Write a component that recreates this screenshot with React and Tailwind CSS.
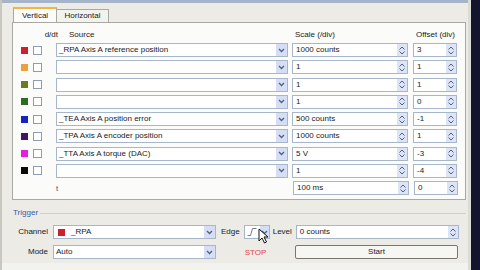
import React from "react";

const ROWS = [
  { color: "bg-[#d01e2c]", source: "_RPA Axis A reference position", scale: "1000 counts", offset: "3" },
  { color: "bg-[#e8a13c]", source: "", scale: "1", offset: "1" },
  { color: "bg-[#6b7a1c]", source: "", scale: "1", offset: "1" },
  { color: "bg-[#2c6b22]", source: "", scale: "1", offset: "0" },
  { color: "bg-[#1522c4]", source: "_TEA Axis A position error", scale: "500 counts", offset: "-1" },
  { color: "bg-[#3e1664]", source: "_TPA Axis A encoder position", scale: "1000 counts", offset: "1" },
  { color: "bg-[#e21ee0]", source: "_TTA Axis A torque (DAC)", scale: "5 V", offset: "-3" },
  { color: "bg-[#0a0a0a]", source: "", scale: "1", offset: "-4" },
];

function Chevron() {
  return (
    <svg width="7" height="5" viewBox="0 0 7 5">
      <path d="M1 1l2.5 2.5L6 1" fill="none" stroke="#4d6185" strokeWidth="1.3" />
    </svg>
  );
}

function Combo({ w, children }) {
  return (
    <div className={`${w} h-[14px] flex items-center bg-white border border-[#a7b6c9] shrink-0`}>
      <div className="flex-1 flex items-center gap-1 px-[2px] truncate">{children}</div>
      <div className="w-[11px] h-[12px] bg-[#d5def5] flex items-center justify-center">
        <Chevron />
      </div>
    </div>
  );
}

function Spin({ w, value }) {
  return (
    <div className={`${w} h-[14px] flex items-center bg-white border border-[#a7b6c9] shrink-0`}>
      <div className="flex-1 px-[3px] truncate">{value}</div>
      <div className="w-[10px] h-[12px] bg-[#dde4f5] flex flex-col items-center justify-center gap-[1px]">
        <svg width="6" height="4" viewBox="0 0 6 4"><path d="M0.5 3.5L3 1l2.5 2.5" fill="none" stroke="#4d6185" strokeWidth="1" /></svg>
        <svg width="6" height="4" viewBox="0 0 6 4"><path d="M0.5 0.5L3 3l2.5-2.5" fill="none" stroke="#4d6185" strokeWidth="1" /></svg>
      </div>
    </div>
  );
}

export default function App() {
  return (
    <div className="w-[480px] h-[270px] flex bg-[#ecebe6] text-[8px] text-[#1a1a1a] overflow-hidden" style={{ fontFamily: "'Liberation Sans', Arial, sans-serif" }}>
      <div className="w-[2px] bg-[#c8c7c0]" />
      <div className="flex-1 flex flex-col">
        <div className="h-[3px] bg-[#a6b4c9]" />

        {/* Tabs */}
        <div className="flex items-end pl-[11px] h-[19px]">
          <div className="w-[44px] h-[15px] bg-[#fbfbf9] border border-b-0 border-[#a8a9a2] border-t-2 border-t-[#f2b544] flex items-center justify-center">Vertical</div>
          <div className="w-[52px] h-[13px] bg-[#f3f3ee] border border-b-0 border-l-0 border-[#a8a9a2] flex items-center justify-center">Horizontal</div>
        </div>

        {/* Channel panel */}
        <div className="ml-[10px] w-[454px] h-[178px] bg-[#fbfbf9] border border-[#a8a9a2] flex flex-col pl-[8px] pt-[6px]">
          <div className="flex items-center h-[12px]">
            <div className="w-[38px] text-right pr-[1px]">d/dt</div>
            <div className="w-[236px] pl-[10px]">Source</div>
            <div className="w-[121px]">Scale (/div)</div>
            <div>Offset (div)</div>
          </div>
          <div className="flex flex-col gap-[3.25px] mt-[2px]">
            {ROWS.map((r, i) => (
              <div key={i} className="flex items-center h-[14px]">
                <div className={`w-[7px] h-[7px] ${r.color}`} />
                <div className="w-[9px] h-[9px] ml-[5px] bg-white border border-[#8e9cb3]" />
                <div className="ml-[14px]"><Combo w="w-[232px]">{r.source}</Combo></div>
                <div className="ml-[4px]"><Spin w="w-[116px]" value={r.scale} /></div>
                <div className="ml-[5px]"><Spin w="w-[44px]" value={r.offset} /></div>
              </div>
            ))}
            <div className="flex items-center h-[14px]">
              <div className="w-[268px] pl-[35px] pt-[2px] text-[#555]">t</div>
              <div className="ml-[4px]"><Spin w="w-[116px]" value="100 ms" /></div>
              <div className="ml-[5px]"><Spin w="w-[44px]" value="0" /></div>
            </div>
          </div>
        </div>

        {/* Trigger */}
        <div className="mt-[8px] flex items-center h-[10px] pl-[11px]">
          <span className="text-[#3260a8]">Trigger</span>
          <div className="flex-1 h-px bg-[#d0cfc8] ml-[2px] mr-[2px]" />
        </div>
        <div className="flex items-center h-[14px] mt-[7px] relative">
          <div className="w-[46px] text-right">Channel</div>
          <div className="ml-[5px]">
            <Combo w="w-[163px]">
              <span className="w-[7px] h-[7px] bg-[#d01e2c] inline-block ml-[2px]" />
              <span className="ml-[2px]">_RPA</span>
            </Combo>
          </div>
          <div className="ml-[5px]">Edge</div>
          <div className="ml-[4px] w-[26px] h-[14px] flex items-center bg-white border border-[#a7b6c9]">
            <div className="flex-1 flex items-center justify-center">
              <svg width="10" height="8" viewBox="0 0 10 8"><path d="M0.5 7.5h3l2-7h4" fill="none" stroke="#707a90" strokeWidth="1" /></svg>
            </div>
            <div className="w-[9px] h-[12px] bg-[#d5def5] flex items-center justify-center"><Chevron /></div>
          </div>
          <div className="ml-[3px]">Level</div>
          <div className="ml-[4px]"><Spin w="w-[163px]" value="0 counts" /></div>
          <svg className="absolute left-[256px] top-[3px]" width="11" height="16" viewBox="0 0 11 16">
            <path d="M1 1v12l3-3 2.5 5 2-1-2.5-5H10z" fill="#fff" stroke="#111" strokeWidth="1" />
          </svg>
        </div>
        <div className="flex items-center h-[14px] mt-[6px]">
          <div className="w-[46px] text-right">Mode</div>
          <div className="ml-[5px]"><Combo w="w-[163px]">Auto</Combo></div>
          <div className="w-[79px] text-center text-[#e04848] pt-[2px]">STOP</div>
          <div className="w-[163px] h-[14px] bg-[#f6f6f2] border border-[#77776f] rounded-[2px] flex items-center justify-center">Start</div>
        </div>
        <div className="flex-1" />
        <div className="h-[7px] bg-[#f2f2ee]" />
      </div>
      <div className="w-[3px] bg-[#dcdcd6]" />
      <div className="w-[9px] bg-[#14142e]" />
    </div>
  );
}
